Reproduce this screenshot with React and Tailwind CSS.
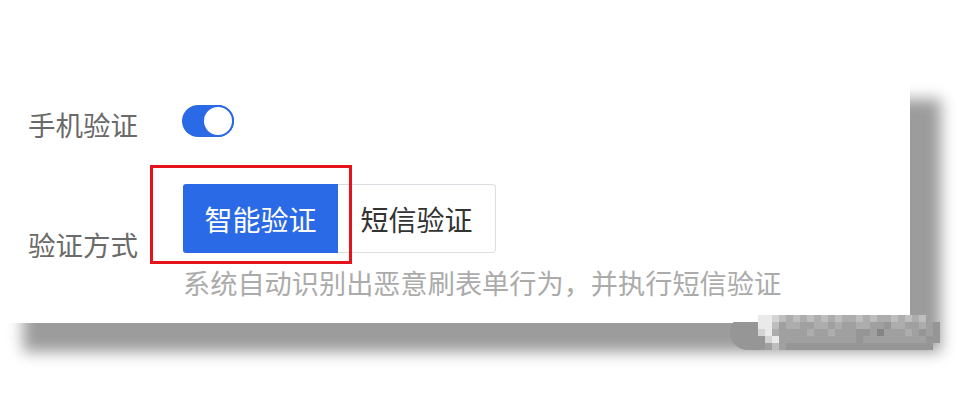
import React from "react";

const C = {
  ".": "bg-transparent",
  a: "bg-[#969696]",
  b: "bg-[#a0a0a0]",
  c: "bg-[#adadad]",
  d: "bg-[#bebebe]",
  e: "bg-[#d4d4d4]",
  f: "bg-[#eaeaea]",
  g: "bg-[#858585]",
};

const rows = [
  "....ffedcdcdcdcdccdcdccdcdcd..",
  "aaaaffdbccbbccbcbbccbbaccbbcba",
  "aaaaefcbbbbcbbcbbbaabgbbbcbaba",
  "aaaaaefbbbbbbbbbbbabbbbbbbbbaa",
  "aaaaabdbaaaaaaaaaaaaaaaaaaaaa.",
];

function Mosaic() {
  return (
    <div className="absolute left-[730px] top-[315px] w-[210px] h-[35px] rounded-l-[18px] rounded-r-[8px] overflow-hidden">
      {rows.map((r, i) => (
        <div key={i} className="flex h-[7px]">
          {r.split("").map((ch, j) => (
            <div key={j} className={"shrink-0 w-[7px] h-[7px] " + C[ch]} />
          ))}
        </div>
      ))}
    </div>
  );
}

export default function App() {
  const font = { fontFamily: '"Noto Sans CJK SC", "Noto Sans", sans-serif' };
  return (
    <div
      className="relative w-[957px] h-[410px] bg-white overflow-hidden pt-[78px]"
      style={font}
    >
      <div className="relative w-[910px] h-[245px] bg-white shadow-[27px_25px_14px_4px_#9c9c9c] pt-[27px] pl-[28px]">
        {/* Row 1 */}
        <div className="flex items-center h-[32px]">
          <div className="w-[154px] pt-[6px] text-[27.5px] leading-[32px] text-[#6a6a6a]">
            手机验证
          </div>
          <div className="relative w-[52px] h-[32px] rounded-full bg-[#2b6ae6]">
            <div className="absolute right-0 top-0 w-[32px] h-[32px] rounded-full bg-white border-[2px] border-[#2b6ae6]" />
          </div>
        </div>

        {/* Row 2 */}
        <div className="flex mt-[47px]">
          <div className="w-[155px] pt-[44px] text-[27.5px] leading-[32px] text-[#6a6a6a]">
            验证方式
          </div>
          <div className="flex flex-col">
            <div className="flex h-[69px]">
              <div className="flex items-center justify-center w-[155px] h-[69px] rounded-l-[3px] bg-[#2b6ae6] text-white text-[28px]">
                智能验证
              </div>
              <div className="flex items-center justify-center w-[158px] h-[69px] rounded-r-[4px] border border-l-0 border-[#dcdde3] bg-white text-[#333333] text-[28px]">
                短信验证
              </div>
            </div>
            <div className="mt-[11px] text-[27.2px] leading-[36px] text-[#ababab] whitespace-nowrap">
              系统自动识别出恶意刷表单行为，并执行短信验证
            </div>
          </div>
        </div>

        {/* annotation box */}
        <div className="absolute left-[150px] top-[87px] w-[202px] h-[99px] border-[3px] border-[#e5141c]" />
      </div>
      <Mosaic />
    </div>
  );
}
